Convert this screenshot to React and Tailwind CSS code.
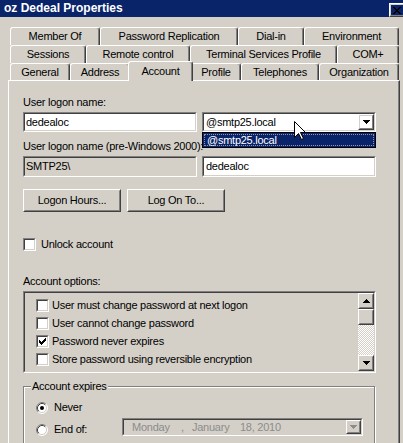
import React from 'react';

const row1 = [
  { label: 'Member Of', w: 'w-[90px]' },
  { label: 'Password Replication', w: 'w-[138px]' },
  { label: 'Dial-in', w: 'w-[66px]' },
  { label: 'Environment', w: 'w-[95px]' },
];

const row2 = [
  { label: 'Sessions', w: 'w-[76px]' },
  { label: 'Remote control', w: 'w-[104px]' },
  { label: 'Terminal Services Profile', w: 'w-[147px]' },
  { label: 'COM+', w: 'w-[62px]' },
];

const row3 = [
  { label: 'General', w: 'w-[60px]' },
  { label: 'Address', w: 'w-[60px]' },
  { label: 'Account', w: 'w-[65px]', active: true },
  { label: 'Profile', w: 'w-[50px]' },
  { label: 'Telephones', w: 'w-[78px]' },
  { label: 'Organization', w: 'w-[80px]' },
];

const options = [
  { label: 'User must change password at next logon', checked: false },
  { label: 'User cannot change password', checked: false },
  { label: 'Password never expires', checked: true },
  { label: 'Store password using reversible encryption', checked: false },
];

function Sunken({ className = '', inner = '', children }) {
  return (
    <div className={`border border-t-[#808080] border-l-[#808080] border-b-white border-r-white ${className}`}>
      <div className={`h-full border border-t-[#404040] border-l-[#404040] border-b-[#d4d0c8] border-r-[#d4d0c8] ${inner}`}>
        {children}
      </div>
    </div>
  );
}

function Raised({ className = '', inner = '', children }) {
  return (
    <div className={`shrink-0 border border-t-white border-l-white border-b-[#404040] border-r-[#404040] ${className}`}>
      <div className={`h-full border border-t-[#d4d0c8] border-l-[#d4d0c8] border-b-[#808080] border-r-[#808080] flex items-center justify-center ${inner}`}>
        {children}
      </div>
    </div>
  );
}

function Tab({ label, w, active }) {
  if (active) {
    return (
      <div className={`${w} shrink-0 -mx-[2px] h-[20px] -mb-[1px] relative z-10 bg-[#d4d0c8] flex items-center justify-center border-t border-l border-r border-t-white border-l-white border-r-[#404040] rounded-t-[3px] shadow-[inset_-1px_0_0_#808080]`}>
        {label}
      </div>
    );
  }
  return (
    <div className={`${w} shrink-0 h-full flex items-center justify-center border-t border-l border-r border-t-white border-l-white border-r-[#404040] rounded-t-[3px] shadow-[inset_-1px_0_0_#808080]`}>
      {label}
    </div>
  );
}

function ArrowDown({ color = '#000' }) {
  return (
    <svg width="7" height="4" viewBox="0 0 7 4" shapeRendering="crispEdges">
      <path fill={color} d="M0 0h7v1H0zM1 1h5v1H1zM2 2h3v1H2zM3 3h1v1H3z" />
    </svg>
  );
}

function ArrowUp() {
  return (
    <svg width="7" height="4" viewBox="0 0 7 4" shapeRendering="crispEdges">
      <path d="M3 0h1v1H3zM2 1h3v1H2zM1 2h5v1H1zM0 3h7v1H0z" />
    </svg>
  );
}

function Checkbox({ checked }) {
  return (
    <Sunken className="w-[13px] h-[13px] shrink-0" inner="bg-white flex items-center justify-center">
      {checked && (
        <svg width="7" height="7" viewBox="0 0 7 7" shapeRendering="crispEdges">
          <path d="M0 2h1v3H0zM1 3h1v3H1zM2 4h1v3H2zM3 3h1v3H3zM4 2h1v3H4zM5 1h1v3H5zM6 0h1v3H6z" />
        </svg>
      )}
    </Sunken>
  );
}

function Radio({ checked }) {
  return (
    <svg width="12" height="12" viewBox="0 0 12 12" className="shrink-0">
      <circle cx="6" cy="6" r="5" fill="#fff" />
      <path d="M2.11 9.89A5.5 5.5 0 0 1 9.89 2.11" fill="none" stroke="#808080" />
      <path d="M9.89 2.11A5.5 5.5 0 0 1 2.11 9.89" fill="none" stroke="#fff" />
      <path d="M2.82 9.18A4.5 4.5 0 0 1 9.18 2.82" fill="none" stroke="#404040" />
      <path d="M9.18 2.82A4.5 4.5 0 0 1 2.82 9.18" fill="none" stroke="#d4d0c8" />
      {checked && <circle cx="6" cy="6" r="2" fill="#000" />}
    </svg>
  );
}

export default function App() {
  return (
    <div className="relative w-[403px] h-[443px] overflow-hidden bg-[#d4d0c8] text-black text-[11px] leading-[13px] tracking-[-0.25px] font-[family-name:'Liberation_Sans',Arial,sans-serif] select-none">
      {/* title bar */}
      <div className="h-[17px] bg-[#0a246a] flex items-start justify-between pl-[4px]">
        <span className="mt-[1px] text-white font-bold text-[12px] leading-[14px] tracking-normal">oz Dedeal Properties</span>
        <Raised className="mt-[3px] -mr-[2px] w-[16px] h-[14px]">
          <svg width="8" height="7" viewBox="0 0 8 7" shapeRendering="crispEdges">
            <path d="M0 0h2v1H0zM6 0h2v1H6zM1 1h2v1H1zM5 1h2v1H5zM2 2h4v1H2zM3 3h2v1H3zM2 4h4v1H2zM1 5h2v1H1zM5 5h2v1H5zM0 6h2v1H0zM6 6h2v1H6z" />
          </svg>
        </Raised>
      </div>

      <div className="pl-[8px] pt-[10px]">
        <div className="w-[392px]">
          {/* tab rows */}
          <div className="pl-[2px]">
            <div className="flex h-[18px]">
              {row1.map((t) => <Tab key={t.label} {...t} />)}
            </div>
            <div className="flex h-[18px]">
              {row2.map((t) => <Tab key={t.label} {...t} />)}
            </div>
            <div className="flex h-[17px] items-end">
              {row3.map((t) => <Tab key={t.label} {...t} />)}
            </div>
          </div>

          {/* tab panel */}
          <div className="h-[380px] border-t border-l border-r border-t-white border-l-white border-r-[#404040] shadow-[inset_-1px_0_0_#808080] pl-[14px]">
            <div className="pt-[15px] w-[353px]">
              <div>User logon name:</div>
              <div className="mt-[3px] flex gap-[5px] h-[20px]">
                <Sunken className="w-[174px]" inner="bg-white pl-[1px] flex items-center">dedealoc</Sunken>
                <div className="relative w-[174px]">
                  <Sunken className="h-full" inner="bg-white flex items-center">
                    <span className="flex-1 pl-[2px]">@smtp25.local</span>
                    <Raised className="w-[16px] h-[16px]">
                      <ArrowDown />
                    </Raised>
                  </Sunken>
                  <div className="absolute left-0 top-[20px] w-full h-[16px] z-20 bg-[#0a246a] border border-black text-white flex items-center p-[1px]">
                    <div className="h-full w-full flex items-center pl-[2px] border border-dotted border-[#8f93b8]">@smtp25.local</div>
                  </div>
                </div>
              </div>

              <div className="mt-[8px]">User logon name (pre-Windows 2000):</div>
              <div className="mt-[3px] flex gap-[5px] h-[21px]">
                <Sunken className="w-[174px]" inner="bg-[#d4d0c8] pl-[1px] flex items-center">SMTP25\</Sunken>
                <Sunken className="w-[174px]" inner="bg-white pl-[2px] flex items-center">dedealoc</Sunken>
              </div>

              <div className="mt-[12px] flex gap-[6px]">
                <Raised className="w-[98px] h-[23px]">Logon Hours...</Raised>
                <Raised className="w-[98px] h-[23px]">Log On To...</Raised>
              </div>

              <div className="mt-[26px] flex items-center gap-[5px] h-[13px]">
                <Checkbox />
                <span>Unlock account</span>
              </div>

              <div className="mt-[24px]">Account options:</div>
              <Sunken className="mt-[3px] h-[82px]" inner="flex bg-[#d4d0c8]">
                <div className="flex-1 pl-[11px] pt-[3px]">
                  {options.map((o) => (
                    <div key={o.label} className="h-[18px] flex items-center gap-[3px]">
                      <Checkbox checked={o.checked} />
                      <span>{o.label}</span>
                    </div>
                  ))}
                </div>
                <div className="w-[16px] flex flex-col">
                  <Raised className="h-[16px]">
                    <ArrowUp />
                  </Raised>
                  <Raised className="h-[16px]" />
                  <div className="flex-1 bg-[repeating-conic-gradient(#ffffff_0_25%,#d4d0c8_0_50%)] bg-[length:2px_2px]" />
                  <Raised className="h-[16px]">
                    <ArrowDown />
                  </Raised>
                </div>
              </Sunken>

              <fieldset className="mt-[7px] w-[352px] h-[90px] border border-[#808080] shadow-[inset_1px_1px_0_#fff,1px_1px_0_#fff] px-[7px]">
                <legend className="px-[1px] bg-[#d4d0c8]">Account expires</legend>
                <div className="ml-[5px] mt-[8px] h-[13px] flex items-center gap-[6px]">
                  <Radio checked />
                  <span>Never</span>
                </div>
                <div className="ml-[5px] mt-[4px] h-[18px] flex items-end">
                  <div className="w-[86px] h-[13px] flex items-center gap-[6px]">
                    <Radio />
                    <span>End of:</span>
                  </div>
                  <Sunken className="w-[241px] h-[18px]" inner="bg-[#d4d0c8] flex items-center text-[#8c8c8c]">
                    <span className="pl-[8px] w-[57px]">Monday</span>
                    <span className="w-[11px]">,</span>
                    <span className="w-[48px]">January</span>
                    <span className="flex-1">18, 2010</span>
                    <Raised className="w-[15px] h-full">
                      <ArrowDown color="#8c8c8c" />
                    </Raised>
                  </Sunken>
                </div>
              </fieldset>
            </div>
          </div>
        </div>
      </div>

      {/* mouse pointer */}
      <svg className="absolute left-[294px] top-[121px] z-30" width="13" height="20" viewBox="0 0 13 20">
        <path d="M0.5 0.5V16.5L4.5 12.5L7.5 18.5L9.5 17.5L6.5 11.5H11.5Z" fill="#fff" stroke="#000" />
      </svg>
    </div>
  );
}
